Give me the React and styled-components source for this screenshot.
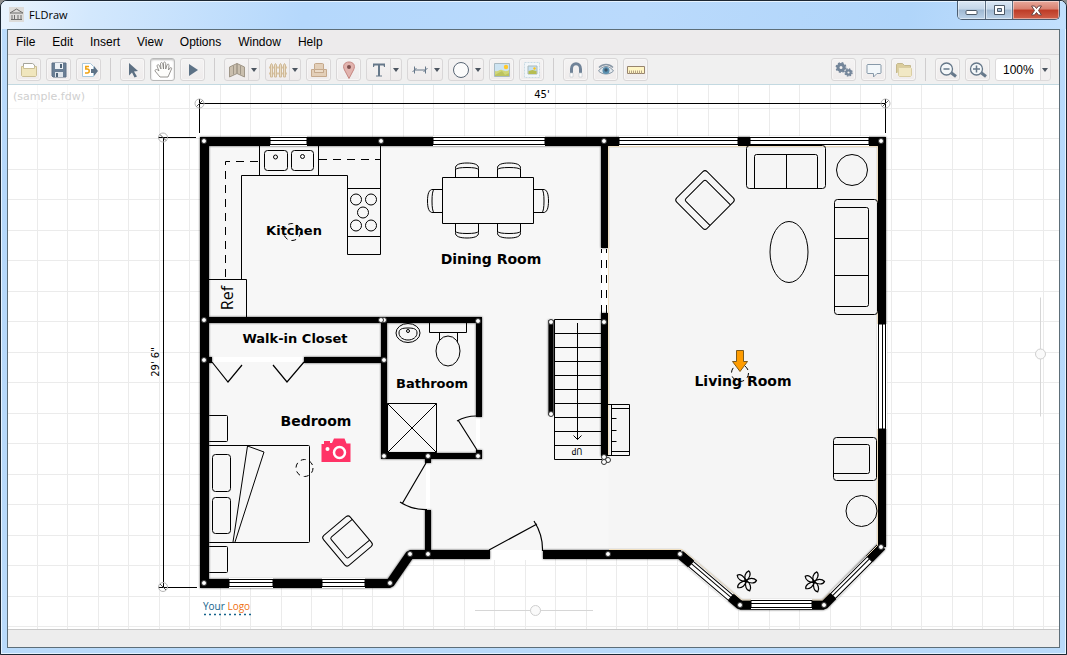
import React from "react";
import styled, { createGlobalStyle } from "styled-components";

const GlobalStyle = createGlobalStyle`
  * {
    box-sizing: border-box;
  }

  body {
    margin: 0;
    background: #8d8d8d;
    font-family: "Liberation Sans", Arial, sans-serif;
    font-size: 12px;
    color: #000;
  }

  button,
  select,
  input {
    margin: 0;
    padding: 0;
    font: inherit;
    color: inherit;
  }
`;

const Frame = styled.div`
  display: flex;
  flex-direction: column;
  height: 100vh;
  padding: 0 6px 6px;
  border: 1px solid #1c2733;
  border-radius: 7px 7px 0 0;
  background: linear-gradient(#bcdcfc, #b5d8fb 180px, #b9dafa);
  box-shadow: inset 0 0 0 1px #e6f3ff;
  overflow: hidden;
`;

const TitleBar = styled.header`
  display: flex;
  align-items: flex-start;
  justify-content: space-between;
  flex: none;
  height: 28px;
  margin: 0 -6px;
  padding: 0 6px 0 8px;
  background: linear-gradient(100deg, #eaf4fe, #d3e8fd 90px, #b5d8fc 300px, #badafc 60%, #b0d5fa 85%, #c3e0fd);
  box-shadow: inset 0 1px 0 #e6f3ff;
`;

const Title = styled.h1`
  display: flex;
  align-items: center;
  gap: 5px;
  height: 27px;
  margin: 0;
  font: 400 11px "Open Sans", "Noto Sans", sans-serif;
`;

const WindowButtons = styled.div`
  display: flex;
  height: 19px;
  border: 1px solid #4b5d70;
  border-top: 0;
  border-radius: 0 0 5px 5px;
  overflow: hidden;
`;

const WindowButton = styled.button`
  display: flex;
  align-items: center;
  justify-content: center;
  width: ${(p) => (p.$close ? 47 : 27)}px;
  border: 0;
  border-left: ${(p) => (p.$first ? "0" : "1px solid #5c6e82")};
  background: ${(p) =>
    p.$close
      ? "linear-gradient(#e8a99c, #d9806f 45%, #bd3b26 50%, #d0604a)"
      : "linear-gradient(#dbe8f5, #c4d6e8 45%, #9fb8d1 50%, #bcd3e9)"};
  box-shadow: inset 0 0 0 1px rgba(255, 255, 255, 0.45);
`;

const Content = styled.div`
  display: flex;
  flex-direction: column;
  flex: 1;
  min-height: 0;
  border: 1px solid #5d6e78;
  background: #f0f0f0;
`;

const MenuBar = styled.nav`
  display: flex;
  align-items: center;
  flex: none;
  gap: 17px;
  height: 25px;
  padding: 0 8px;
  background: #edebec;
  border-bottom: 1px solid #d8d6d7;
`;

const MenuItem = styled.button`
  border: 0;
  background: none;
  line-height: 24px;
`;

const ToolBar = styled.div`
  display: flex;
  align-items: center;
  justify-content: space-between;
  flex: none;
  height: 30px;
  padding: 0 8px;
  background: #f0f0f0;
  border-bottom: 1px solid #c3d9e1;
`;

const ToolGroup = styled.div`
  display: flex;
  align-items: center;
  gap: 5px;
`;

const ToolButton = styled.button`
  display: flex;
  align-items: center;
  justify-content: center;
  width: 25px;
  height: 23px;
  border: 1px solid ${(p) => (p.$pressed ? "#b9b9b9" : "#d9d7d8")};
  border-radius: 3px;
  background: ${(p) => (p.$pressed ? "#fff" : "linear-gradient(#f4f3f3, #efecec)")};
  box-shadow: ${(p) => (p.$pressed ? "inset 0 1px 2px #bbb" : "inset 0 0 0 1px #f7f6f6")};
`;

const Split = styled.div`
  display: flex;
  width: 36px;
  height: 23px;
  border: 1px solid #d9d7d8;
  border-radius: 3px;
  background: linear-gradient(#f4f3f3, #efecec);
`;

const SplitMain = styled.button`
  display: flex;
  align-items: center;
  justify-content: center;
  flex: 1;
  border: 0;
  border-right: 1px solid #d9d7d8;
  background: none;
`;

const SplitArrow = styled.button`
  display: flex;
  align-items: center;
  justify-content: center;
  width: 10px;
  border: 0;
  background: none;
`;

const Separator = styled.span`
  width: 1px;
  height: 23px;
  margin: 0 4px;
  background: #cfcdce;
`;

const ZoomBox = styled.label`
  display: grid;
  grid-template-columns: 1fr 10px;
  align-items: center;
  width: 56px;
  height: 23px;
  border: 1px solid #dcdadb;
  border-radius: 3px;
  background: linear-gradient(90deg, #fff 44px, #d9d7d8 44px, #d9d7d8 45px, #f2f0f0 45px);

  svg {
    grid-area: 1 / 2;
    justify-self: center;
    pointer-events: none;
  }
`;

const ZoomSelect = styled.select`
  grid-area: 1 / 1 / 2 / 3;
  height: 21px;
  padding-left: 7px;
  border: 0;
  background: none;
  appearance: none;
`;

const Canvas = styled.main`
  position: relative;
  flex: 1;
  min-height: 0;
  overflow: hidden;
  background-color: #fff;
  background-image:
    linear-gradient(#ebebeb 1px, transparent 1px), linear-gradient(#ebebeb 1px, transparent 1px),
    linear-gradient(90deg, #ebebeb 1px, transparent 1px), linear-gradient(90deg, #ebebeb 1px, transparent 1px);
  background-size: 61px 61px;
  background-position: 0 23px, 0 53px, 29px 0, 59px 0;
`;

const FileLabel = styled.div`
  position: absolute;
  top: 0;
  left: 0;
  padding: 0 8px 0 5px;
  background: rgba(255, 255, 255, 0.6);
  color: #cfcfcf;
  font: 11px/24px "DejaVu Sans", Verdana, sans-serif;
`;

const Plan = styled.svg`
  display: block;
  font-family: "DejaVu Sans", Verdana, sans-serif;
`;

const Walls = styled.g`
  filter: drop-shadow(0 0 1px rgba(0, 0, 0, 0.7));
`;

const PlainText = styled.text`
  font-family: "Open Sans", "Noto Sans", sans-serif;
  font-size: ${(p) => p.$size}px;
`;

const PanSlider = styled.input`
  position: absolute;
  appearance: none;
  background: linear-gradient(#d6d6d6, #d6d6d6) center / ${(p) => (p.$vertical ? "1px 100%" : "100% 1px")} no-repeat;
  ${(p) =>
    p.$vertical
      ? "right: 13px; top: 50%; width: 11px; height: 119px; transform: translateY(-50%); writing-mode: vertical-lr;"
      : "bottom: 13px; left: 50%; width: 118px; height: 11px; transform: translateX(-50%);"}

  &::-webkit-slider-thumb {
    appearance: none;
    width: 11px;
    height: 11px;
    border: 1px solid #cfcfcf;
    border-radius: 50%;
    background: #fafafa;
  }
`;

const StatusBar = styled.footer`
  flex: none;
  height: 18px;
  border-top: 1px solid #c9c9c9;
  background: #ededed;
`;

const slate = "#66788a";

const iconShapes = {
  open: (
    <>
      <path d="M4.5 8V3.500h9l2 1.500v3" fill="#fff" stroke="#a5a59b" />
      <path d="M2.500 6.500h2v2h11v-2h2v9l-1 1h-13l-1-1z" fill="#f0e6bd" stroke="#cbbf95" />
    </>
  ),
  save: (
    <>
      <path d="M3 3h14v14H4l-1-1z" fill="#6a7f95" stroke="#5c7086" />
      <path d="M6 3h8v6H6z" fill="#edf1f5" />
      <path d="M6 12h8v5H6z" fill="#dfe5eb" />
      <path d="M11 4h2v4h-2zM7 13h2v4H7z" fill="#4f6478" />
    </>
  ),
  exportFile: (
    <>
      <path d="M3.500 3.500h8l3 3v10h-11z" fill="#fff" stroke="#a9c8dc" />
      <path d="M10 6.500H6.800V9h1.400a2 2 0 0 1 0 4H6" fill="none" stroke="#f0a210" strokeWidth="1.500" />
      <path d="M12 9h3V6l4 5-4 5v-3h-3z" fill="#5d7286" />
    </>
  ),
  pointer: <path d="M6 3l9 8-4 .5 3 5-2.500 1-2.500-5-3 3z" fill="#5d7083" />,
  hand: (
    <path
      d="M7 17l-5-6c0-2 2-2 4 0L4 6c0-1.500 2-2 2.500 0L8 9 7.500 4c0-2 2-2 2.300 0L10.500 9V3.500c0-2 2-2 2.200 0V9l1.300-4c.5-1.500 2.300-1 2 .5L15.500 10l1.500-2c1-1 2 0 1.500 1L15 17z"
      fill="#fdfdfb"
      stroke="#7d7b77"
      strokeWidth=".8"
    />
  ),
  play: <path d="M6 4l9 6-9 6z" fill="#5d7286" />,
  wall: (
    <>
      <path d="M2.500 7L10 3.500v10L2.500 17zM17.500 7L10 3.500v10l7.500 3.500z" fill="#cabfae" stroke="#a09788" />
      <path d="M6.500 5.500v9M13.500 5.500v9" stroke="#a09788" />
    </>
  ),
  fence: (
    <>
      <path d="M1 7.500h18M1 13.500h18" stroke="#dcc7a6" strokeWidth="2" />
      <path
        d="M2.500 17V5L3.500 3.500 4.500 5v12zM6.500 17V5L7.500 3.500 8.500 5v12zM11.500 17V5l1-1.500 1 1.500v12zM15.500 17V5l1-1.500 1 1.500v12z"
        fill="#eadcc4"
        stroke="#cfb997"
      />
    </>
  ),
  furniture: (
    <>
      <path d="M5.500 9V4l1-.5h7l1 .5v5" fill="#e3cfb8" stroke="#c5a98c" />
      <path d="M2.500 9.500h3v3h9v-3h3v7h-15z" fill="#e3cfb8" stroke="#c5a98c" />
      <path d="M5.500 12.500v-3h9v3z" fill="#ecdcc9" stroke="#c5a98c" />
    </>
  ),
  pin: (
    <>
      <path d="M10 18.500L5.500 10C3 5 6 2 10 2s7 3 4.500 8z" fill="#e2b3ae" stroke="#c58680" />
      <circle cx="10" cy="7" r="2" fill="#7d504d" />
    </>
  ),
  text: (
    <>
      <path d="M4 3.500h12v3.500h-1l-.5-1.500h-9L5 7H4z" fill={slate} />
      <path d="M10 4v12" stroke={slate} strokeWidth="2" />
      <path d="M7 16h6" stroke={slate} />
    </>
  ),
  dimension: <path d="M4.500 10h11M4.500 6.500v7M15.500 6.500v7M2.500 12l4-4M13.500 12l4-4" fill="none" stroke={slate} />,
  shape: <circle cx="10" cy="10" r="7.500" fill="#fbfbfb" stroke="#596675" />,
  image: (
    <>
      <path d="M2.500 3.500h15v13h-15z" fill="#cde4f2" stroke="#a9bac2" />
      <path d="M3 11c4 1 4-2 7-1s4 2 7 0v6H3z" fill="#d0d678" />
      <path d="M3 15l7-4 3 4 4-2v3H3z" fill="#bcc45f" />
      <circle cx="14" cy="7" r="2.200" fill="#ffc82a" />
    </>
  ),
  background: (
    <>
      <path d="M2.500 2.500h15v15h-15z" fill="#f1f6f9" stroke="#c9dae3" strokeDasharray="2 1" />
      <path d="M6 6h9v8H6z" fill="#c6e0f0" stroke="#a9b9bb" />
      <path d="M6.500 11l4-1 4 1v3h-8z" fill="#b6be52" />
      <circle cx="12.500" cy="8.500" r="1.200" fill="#ffc30e" />
    </>
  ),
  magnet: (
    <>
      <path d="M5.500 14V9c0-7 9-7 9 0v5" fill="none" stroke="#708398" strokeWidth="3" />
      <path d="M4 13h3v4H4zM13 13h3v4h-3z" fill="#fff" stroke="#c0c7cf" strokeWidth=".6" />
    </>
  ),
  eye: (
    <>
      <path d="M2.500 11c4-6 11-6 15 0-4 4-11 4-15 0z" fill="#e4eaef" stroke="#8495a4" />
      <path d="M3 7.500c4-4 10-4 14 0" fill="none" stroke="#8796a5" strokeWidth="1.500" />
      <circle cx="10" cy="10.500" r="3.500" fill="#5a90b0" />
      <circle cx="10" cy="10" r="1.700" fill="#3b556a" />
    </>
  ),
  ruler: (
    <>
      <path d="M1.500 6.500h17v7h-17z" fill="#fff5c4" stroke="#97846e" />
      <path d="M3.500 10.500v3M5.500 10.500v3M7.500 10.500v3M9.500 10.500v3M11.500 10.500v3M13.500 10.500v3M15.500 10.500v3" stroke="#b5a284" />
    </>
  ),
  gears: (
    <>
      <circle cx="7" cy="7.500" r="3" fill="none" stroke="#74869a" strokeWidth="3" />
      <circle cx="7" cy="7.500" r="4.700" fill="none" stroke="#74869a" strokeWidth="1.500" strokeDasharray="2 1.700" />
      <circle cx="14.500" cy="12.500" r="2.200" fill="none" stroke="#74869a" strokeWidth="2.200" />
      <circle cx="14.500" cy="12.500" r="3.500" fill="none" stroke="#74869a" strokeWidth="1.500" strokeDasharray="1.500 1.250" />
    </>
  ),
  comment: (
    <path d="M3.500 4.500h13l.5.500v8l-.5.500H13L9.500 17v-3.500h-6L3 13V5z" fill="#f2f7fa" stroke="#8799a9" />
  ),
  folder: (
    <>
      <path d="M2.500 13V4.500l1-1h5l2 2h6v3" fill="#dbcd9c" stroke="#c4b88d" />
      <path d="M5.500 7.500h11l1 1v7l-1 1h-11l-1-1v-7z" fill="#f1e8c4" stroke="#dacea3" />
    </>
  ),
  zoomOut: (
    <>
      <circle cx="8.500" cy="9" r="6" fill="#f4f7f9" stroke={slate} strokeWidth="1.300" />
      <path d="M5.500 9h6" stroke={slate} strokeWidth="1.500" />
      <path d="M13.500 13l4.500 3.500" stroke={slate} strokeWidth="3" />
    </>
  ),
  zoomIn: (
    <>
      <circle cx="8.500" cy="9" r="6" fill="#f4f7f9" stroke={slate} strokeWidth="1.300" />
      <path d="M5 9h7M8.500 5.500v7" stroke={slate} strokeWidth="1.500" />
      <path d="M13.500 13l4.500 3.500" stroke={slate} strokeWidth="3" />
    </>
  ),
};

const leftTools = [
  { icon: "open", label: "Open" },
  { icon: "save", label: "Save" },
  { icon: "exportFile", label: "Export" },
  null,
  { icon: "pointer", label: "Select" },
  { icon: "hand", label: "Pan", pressed: true },
  { icon: "play", label: "Play" },
  null,
  { icon: "wall", label: "Wall", split: true },
  { icon: "fence", label: "Fence", split: true },
  { icon: "furniture", label: "Furniture" },
  { icon: "pin", label: "Marker" },
  { icon: "text", label: "Text", split: true },
  { icon: "dimension", label: "Dimension", split: true },
  { icon: "shape", label: "Shape", split: true },
  { icon: "image", label: "Image" },
  { icon: "background", label: "Background" },
  null,
  { icon: "magnet", label: "Snap" },
  { icon: "eye", label: "Visibility" },
  { icon: "ruler", label: "Ruler" },
];

const rightTools = [
  { icon: "gears", label: "Settings" },
  { icon: "comment", label: "Comment" },
  { icon: "folder", label: "Library" },
  null,
  { icon: "zoomOut", label: "Zoom out" },
  { icon: "zoomIn", label: "Zoom in" },
];

const menus = ["File", "Edit", "Insert", "View", "Options", "Window", "Help"];

function Icon({ name }) {
  return (
    <svg width="20" height="20" viewBox="0 0 20 20" aria-hidden="true">
      {iconShapes[name]}
    </svg>
  );
}

function Arrow() {
  return (
    <svg width="6" height="4" viewBox="0 0 6 4" aria-hidden="true">
      <path d="M0 0h6L3 4z" fill="#4c5560" />
    </svg>
  );
}

function Tools({ list }) {
  return list.map((it, i) => {
    if (!it) return <Separator key={i} />;
    if (it.split) {
      return (
        <Split key={i}>
          <SplitMain aria-label={it.label}>
            <Icon name={it.icon} />
          </SplitMain>
          <SplitArrow aria-label={it.label + " options"}>
            <Arrow />
          </SplitArrow>
        </Split>
      );
    }
    return (
      <ToolButton key={i} aria-label={it.label} $pressed={it.pressed}>
        <Icon name={it.icon} />
      </ToolButton>
    );
  });
}

// the plan: x1, y1, x2, y2, thickness
const walls = [
  [200, 141.5, 886, 141.5, 9],
  [204.5, 137, 204.5, 588, 9],
  [200, 583.5, 390, 583.5, 9],
  [410, 554.5, 490, 554.5, 9],
  [543, 554.5, 681, 554.5, 9],
  [882, 137, 882, 547, 8],
  [740, 605, 824, 605, 9],
  [205, 320, 481, 320, 6],
  [205, 360, 212, 360, 6],
  [304, 360, 384, 360, 6],
  [384, 317, 384, 459, 6],
  [381, 456, 482, 456, 6],
  [479, 317, 479, 417, 6],
  [479, 450, 479, 459, 6],
  [551, 320, 551, 415, 5],
  [604.5, 142, 604.5, 248, 7],
  [604.5, 313, 604.5, 456, 7],
  [428, 456, 428, 463, 6],
  [428, 510, 428, 555, 6],
];

const windows = [
  [270, 141, 307, 141],
  [433, 141, 545, 141],
  [619, 141, 738, 141],
  [750, 141, 869, 141],
  [882, 324, 882, 429],
  [229, 583, 273, 583],
  [322, 583, 365, 583],
  [691, 564, 731, 598],
  [751, 604, 812, 604],
  [833, 596, 870, 559],
];

const nodes = [
  [204, 141], [381, 141], [604, 141], [881, 141], [204, 320], [384, 320], [381, 320],
  [204, 360], [384, 360], [384, 456], [428, 456], [478, 456], [478, 321], [551, 322],
  [551, 414], [604, 322], [604, 457], [608, 460], [604, 462], [410, 554], [428, 554],
  [608, 554], [680, 554], [740, 605], [824, 605], [881, 547], [204, 583], [390, 583],
];

const rooms = [
  ["Kitchen", 294, 235, 13],
  ["Dining Room", 491, 264, 14],
  ["Walk-in Closet", 295, 343, 13],
  ["Bathroom", 432, 388, 13],
  ["Bedroom", 316, 426, 14],
  ["Living Room", 743, 386, 14],
];

function WindowPane({ x1, y1, x2, y2 }) {
  const len = Math.round(Math.hypot(x2 - x1, y2 - y1));
  const angle = (Math.atan2(y2 - y1, x2 - x1) * 180) / Math.PI;
  return (
    <g transform={`translate(${x1} ${y1}) rotate(${angle})`}>
      <path d={`M0 -5H${len}V5H0z`} fill="#fff" stroke="none" />
      <path d={`M0 -3.500H${len}V3.500H0zM0 -.5H${len}`} fill="#fff" />
    </g>
  );
}

function DiningChair({ x, y, turn = 0 }) {
  return (
    <g transform={`translate(${x} ${y}) rotate(${turn})`}>
      <path d="M-11.500 0V-9C-12-13-7-14.500 0-14.500S12-13 11.500-9V0" />
      <path d="M-11.500-8Q-10-10 0-10T11.500-8" />
    </g>
  );
}

function Armchair({ x, y, w, d, arm, turn }) {
  const l = -w / 2;
  const t = -d / 2;
  return (
    <g transform={`translate(${x} ${y}) rotate(${turn})`}>
      <rect x={l} y={t} width={w} height={d} rx="3" />
      <path d={`M${l + arm} ${-t}V${t + arm + 2}q0-2 2-2H${-l - arm - 2}q2 0 2 2V${-t}`} />
    </g>
  );
}

function Plant({ x, y }) {
  return (
    <g transform={`translate(${x} ${y})`} strokeWidth="1.200">
      {[0, 72, 144, 216, 288].map((a) => (
        <path key={a} d="M-1 0C3-3.500 8-3.500 10.500-.5C9 3 4 2.500-1 0" transform={`rotate(${a})`} />
      ))}
    </g>
  );
}

function DimensionEnd({ x, y, flip }) {
  return (
    <g>
      <circle cx={x} cy={y} r="4.500" stroke="#b5b5b5" />
      <path d={flip ? `M${x - 3} ${y - 3}l6 6` : `M${x - 3} ${y + 3}l6 -6`} stroke="#555" />
    </g>
  );
}

function FloorPlan() {
  const treads = [333, 347, 361, 375, 389, 403, 417, 431, 445];
  return (
    <Plan width="1051" height="544" viewBox="8 85 1051 544" fill="none" stroke="#000" role="img" aria-label="Floor plan">
      <path d="M204 141H882V547L824 605H740L680 554H410L390 583H204z" fill="#f7f7f7" stroke="none" />
      <path d="M608.500 146H878V546L822 600.500H742L682 549.500H608.500" fill="#f5f5f5" stroke="none" />

      {/* openings under the doors */}
      <g fill="#fff" stroke="none">
        <path d="M212 357h92v5h-92zM476 417h4v33h-4zM426 463h4v47h-4zM490 550h53v10h-53zM601 248h7v65h-7z" />
      </g>

      <Walls>
        {walls.map(([x1, y1, x2, y2, w], i) => (
          <line key={i} x1={x1} y1={y1} x2={x2} y2={y2} strokeWidth={w} />
        ))}
        <path d="M882 546L824 605H740L680 554.500" strokeWidth="9" strokeLinejoin="bevel" />
        <path d="M420 554.500H410L390 583.500H380" strokeWidth="9" strokeLinejoin="bevel" />
      </Walls>
      <path d="M608.500 456V146.500H877.500V545.500L822.500 600H742L682 549.500H609" stroke="#f0dfc0" />
      {windows.map(([x1, y1, x2, y2], i) => (
        <WindowPane key={i} x1={x1} y1={y1} x2={x2} y2={y2} />
      ))}
      <path d="M601.500 249V313M606.500 249V313" strokeDasharray="8 7" strokeDashoffset="4" />

      {/* doors */}
      <path d="M212 362L228 382L242 365M273 365L287 382L304 362" strokeWidth="1.200" />
      <path d="M477 450L458 420M457 421Q466 416 476 416" strokeWidth="1.200" />
      <path d="M426 463L402 504M400 502Q412 510 427 509.500" strokeWidth="1.200" />
      <path d="M489 550L537 524M534 521Q543 535 542.500 551" strokeWidth="1.200" />

      {/* kitchen */}
      <path d="M259.500 146V175.500M318.500 146V175.500M241.500 279V175.500H347.500V254.500H380.500V146M347.500 188.500H380.500M347.500 236.500H380.500" />
      <rect x="264.500" y="150.500" width="23" height="20" rx="3" />
      <rect x="291.500" y="150.500" width="22" height="20" rx="3" />
      <circle cx="275.500" cy="157" r="2" />
      <circle cx="302.500" cy="156.500" r="2" />
      <path d="M225.500 277V161.500H259M319 159.500H380" strokeDasharray="8 6" />
      {[[356, 199], [371, 199], [363, 212], [356, 225], [371, 225]].map(([x, y]) => (
        <circle key={x + "-" + y} cx={x} cy={y + 0.5} r="5.500" />
      ))}
      <path d="M208.500 279.500H246.500V317.500H208.500z" />
      <PlainText $size={16} transform="translate(233 298) rotate(-90)" textAnchor="middle" fill="#000" stroke="none">
        Ref
      </PlainText>

      {/* dining table */}
      <path d="M442.500 177.500H533.500V223.500H442.500z" />
      <DiningChair x={467} y={177.5} />
      <DiningChair x={509} y={177.5} />
      <DiningChair x={467} y={223.5} turn={180} />
      <DiningChair x={509} y={223.5} turn={180} />
      <DiningChair x={442} y={201} turn={-90} />
      <DiningChair x={534} y={201} turn={90} />

      {/* living room */}
      <Armchair x={705} y={200} w={43} d={43} arm={7} turn={-45} />
      <Armchair x={855} y={459} w={43} d={43} arm={7} turn={90} />
      <rect x="746.500" y="145.500" width="79" height="43" rx="3" />
      <path d="M754.500 188V156.500q0-2 2-2H815.500q2 0 2 2V188M786.500 154.500V188" />
      <rect x="834.500" y="199.500" width="43" height="115" rx="3" />
      <path d="M834.500 207.500H866.500q2 0 2 2V304.500q0 2-2 2H834.500M834.500 238.500H868M834.500 275.500H868" />
      <circle cx="852" cy="170" r="15.500" />
      <circle cx="861.500" cy="511" r="15.500" />
      <ellipse cx="789" cy="252" rx="19" ry="30.500" />
      <path d="M608 404.500H629.500V455.500H608M611.500 404.500V455.500M611.500 408.500H629.500M611.500 451.500H629.500M611.500 418.500h5M611.500 430.500h5M611.500 441.500h5" />
      <Plant x={746} y={581} />
      <Plant x={814} y={582} />

      {/* stairs */}
      <path d="M554.500 319.500H601.500M554.500 319.500V459.500H602" />
      {treads.map((y) => (
        <path key={y} d={`M554.500 ${y + 0.5}H601.500`} />
      ))}
      <path d="M577.500 323V439.500M573.500 435.500L577.500 439.500L581.500 435.500" />
      <text transform="translate(577 448) rotate(180)" textAnchor="middle" fontSize="8" fill="#000" stroke="none">
        UP
      </text>

      {/* bathroom */}
      <ellipse cx="408" cy="333" rx="12" ry="9.500" />
      <path d="M399 333c0-4 3-5 9-5s9 1 9 5-4 7-9 7-9-3-9-7z" />
      <circle cx="408" cy="331" r="1.500" />
      <path d="M429.500 323V332.500H466.500V323M439.500 332.500V342M457.500 332.500V342" />
      <ellipse cx="448" cy="351" rx="12" ry="15" fill="#f7f7f7" />
      <path d="M387.500 403.500H436.500V452.500H387.500zM387.500 403.500L436.500 452.500M436.500 403.500L387.500 452.500" />

      {/* bedroom */}
      <rect x="208.500" y="415.500" width="19" height="26" rx="1" />
      <rect x="208.500" y="546.500" width="19" height="26" rx="1" />
      <rect x="208.500" y="445.500" width="101" height="97" rx="1" />
      <rect x="212.500" y="454.500" width="18" height="37" rx="3" />
      <rect x="212.500" y="497.500" width="18" height="36" rx="3" />
      <path d="M233 542L247.500 446L264 452L235 542" />
      <Armchair x={347.5} y={541} w={39} d={35} arm={6} turn={-130} />

      {nodes.map(([x, y], i) => (
        <circle key={i} cx={x} cy={y} r="2.500" fill="#fff" stroke="#333" />
      ))}

      {/* dimensions */}
      <path d="M199.500 103.500H885.500M199.500 99V133M885.500 99V133M163.500 137V587M158 137.500H196M158 587.500H197" />
      <DimensionEnd x={199.5} y={103.5} />
      <DimensionEnd x={885.5} y={103.5} />
      <DimensionEnd x={163} y={137.5} flip />
      <DimensionEnd x={163} y={587} flip />
      <g fill="#000" stroke="none" textAnchor="middle" fontSize="10">
        <text x="542" y="98">45'</text>
        <text transform="translate(159 362) rotate(-90)">29' 6"</text>
      </g>

      <g strokeDasharray="5 4">
        <circle cx="292" cy="232" r="8.500" />
        <circle cx="304.500" cy="468" r="8.500" />
        <circle cx="740" cy="373" r="8.500" />
      </g>
      <g fill="#000" stroke="none" textAnchor="middle" fontWeight="700">
        {rooms.map(([name, x, y, size]) => (
          <text key={name} x={x} y={y} fontSize={size}>
            {name}
          </text>
        ))}
      </g>

      <path d="M736.500 350.500H743.500V361.500H747.500L740 371.500L732.500 361.500H736.500z" fill="#ff9c00" stroke="#7d5b1c" />
      <g stroke="none" fill="#ff3366">
        <path d="M321.500 444H324V441H330V443H332L334 438.500H344.500L346.500 443.500H350.500V462H321.500z" />
        <circle cx="327.500" cy="449" r="2" fill="#fff" />
        <circle cx="339.500" cy="452.500" r="5.500" stroke="#fff" strokeWidth="2.500" />
      </g>

      <PlainText $size={10} x="203" y="610" stroke="none" fill="#14638c">
        Your <tspan fill="#ef7012">Logo</tspan>
      </PlainText>
      <path d="M204 614.500H251" stroke="#14638c" strokeWidth="1.500" strokeDasharray="2 3" />
    </Plan>
  );
}

function App() {
  return (
    <>
      <GlobalStyle />
      <Frame>
        <TitleBar>
          <Title>
            <svg width="15" height="15" viewBox="0 0 15 15" aria-hidden="true">
              <path d="M0 0h15v15H0z" fill="#dddcda" />
              <path d="M1 6l6.500-4L14 6zM2 12.500h11M3 8v4M5.500 8v4M9 8v4M12 8v4" fill="none" stroke="#6e6e6c" />
            </svg>
            FLDraw
          </Title>
          <WindowButtons>
            <WindowButton $first aria-label="Minimize">
              <svg width="13" height="13" viewBox="0 0 13 13">
                <rect x="1" y="6.500" width="11" height="4" rx="1" fill="#fff" stroke="#4c5966" />
              </svg>
            </WindowButton>
            <WindowButton aria-label="Maximize">
              <svg width="13" height="13" viewBox="0 0 13 13">
                <path d="M1.500 1.500h10v9h-10zM4.500 4.500v3h4v-3z" fill="#fff" fillRule="evenodd" stroke="#4c5966" />
              </svg>
            </WindowButton>
            <WindowButton $close aria-label="Close">
              <svg width="13" height="13" viewBox="0 0 13 13">
                <path d="M1.500 2h3l2 2.500 2-2.500h3L8.500 6.500l3 4.500h-3l-2-2.500-2 2.500h-3l3-4.500z" fill="#fff" stroke="#6b4544" />
              </svg>
            </WindowButton>
          </WindowButtons>
        </TitleBar>
        <Content>
          <MenuBar>
            {menus.map((it) => (
              <MenuItem key={it}>{it}</MenuItem>
            ))}
          </MenuBar>
          <ToolBar>
            <ToolGroup>
              <Tools list={leftTools} />
            </ToolGroup>
            <ToolGroup>
              <Tools list={rightTools} />
              <ZoomBox>
                <ZoomSelect aria-label="Zoom level" defaultValue="100%">
                  <option>50%</option>
                  <option>100%</option>
                  <option>200%</option>
                </ZoomSelect>
                <Arrow />
              </ZoomBox>
            </ToolGroup>
          </ToolBar>
          <Canvas>
            <FloorPlan />
            <FileLabel>(sample.fdw)</FileLabel>
            <PanSlider type="range" $vertical defaultValue={47} aria-label="Pan vertically" />
            <PanSlider type="range" defaultValue={52} aria-label="Pan horizontally" />
          </Canvas>
          <StatusBar />
        </Content>
      </Frame>
    </>
  );
}

export default App;
